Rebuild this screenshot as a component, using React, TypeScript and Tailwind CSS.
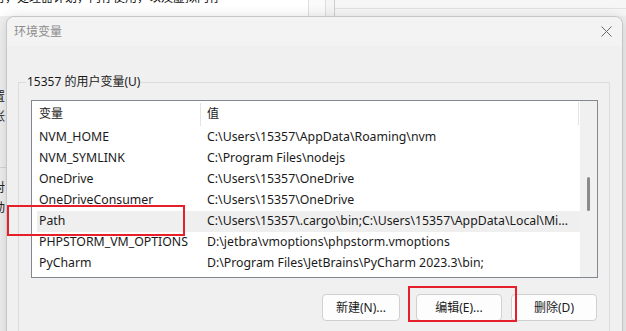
import React from "react";

const rows: [string, string][] = [
  ["NVM_HOME", "C:\\Users\\15357\\AppData\\Roaming\\nvm"],
  ["NVM_SYMLINK", "C:\\Program Files\\nodejs"],
  ["OneDrive", "C:\\Users\\15357\\OneDrive"],
  ["OneDriveConsumer", "C:\\Users\\15357\\OneDrive"],
  ["Path", "C:\\Users\\15357\\.cargo\\bin;C:\\Users\\15357\\AppData\\Local\\Mi..."],
  ["PHPSTORM_VM_OPTIONS", "D:\\jetbra\\vmoptions\\phpstorm.vmoptions"],
  ["PyCharm", "D:\\Program Files\\JetBrains\\PyCharm 2023.3\\bin;"],
];

function CloseIcon() {
  return (
    <svg width="11" height="11" viewBox="0 0 11 11" fill="none">
      <path d="M0.5 0.5L10.5 10.5M10.5 0.5L0.5 10.5" stroke="#6b6b6b" strokeWidth="1" />
    </svg>
  );
}

export default function App() {
  return (
    <div className="relative h-[331px] w-[626px] overflow-hidden bg-[#f0f0f0] font-['Noto_Sans','Noto_Sans_CJK_SC',sans-serif] text-[12px] text-black">
      {/* window behind, top strip */}
      <div className="flex h-[16px]">
        <div className="relative w-[308px] overflow-hidden bg-white">
          <span className="absolute left-[-7px] top-[-10px] whitespace-nowrap text-[12px] leading-[16px] text-[#111]">
            对，处理器计划，内存使用，以及虚拟内存
          </span>
        </div>
        <div className="w-[17px] border-l border-[#dedede] bg-[#fafafa]" />
        <div className="w-[9px] border-l border-[#dedede] bg-[#f5f5f5]" />
        <div className="flex-1 border-l border-[#cfcfcf] bg-[#f6f6f6]">
          <div className="mt-[8px] border-t border-[#e2e2e2]" />
        </div>
      </div>

      {/* window behind, left strip */}
      <div className="w-[6px] overflow-hidden">
        <div className="ml-[-7px] pt-[71px] leading-[20px] text-[#222]">
          <div>置</div>
          <div>张</div>
        </div>
        <div className="mt-[40px] border-t border-[#d6d6d6]" />
        <div className="ml-[-7px] pt-[10px] leading-[20px] text-[#222]">
          <div>对</div>
          <div>动</div>
        </div>
      </div>

      {/* dialog */}
      <div className="absolute left-[6px] top-[16px] flex h-[340px] w-[617px] flex-col rounded-t-[8px] border border-[#c6c6c6] bg-[#f0f0f0] shadow-[0_2px_14px_rgba(0,0,0,0.16)]">
        <div className="flex h-[29px] items-center justify-between rounded-t-[8px] bg-[#f3f3f3] pl-[7px] pr-[10px]">
          <span className="text-[12px] text-[#8c8c8c]">环境变量</span>
          <CloseIcon />
        </div>

        <div className="pl-[11px] pr-[12px]">
          <fieldset className="mt-[28px] h-[280px] border border-[#dcdcdc] pl-[7px] pr-[11px] pt-[10px]">
            <legend className="px-[1px] leading-[16px] text-[12px] text-[#1a1a1a]">15357 的用户变量(U)</legend>

            <div className="ml-[5px] flex h-[178px] border border-[#828790] bg-white">
              <div className="flex-1">
                <div className="relative flex h-[26px] items-center">
                  <div className="w-[168px] pl-[7px] text-[#1a1a1a]">变量</div>
                  <div className="h-[23px] w-px bg-[#e3e3e3]" />
                  <div className="flex-1 pl-[6px] text-[#1a1a1a]">值</div>
                  <div className="absolute right-[1px] top-[1px] h-[23px] w-px bg-[#e3e3e3]" />
                </div>
                {rows.map(([name, value]) => (
                  <div
                    key={name}
                    className={
                      name === "Path"
                        ? "ml-[5px] flex h-[21px] items-center bg-[#efefef] text-[12.3px] text-[#1a1a1a]"
                        : "ml-[5px] flex h-[21px] items-center text-[12.3px] text-[#1a1a1a]"
                    }
                  >
                    <div className="w-[170px] whitespace-nowrap pl-[2px]">{name}</div>
                    <div className="flex-1 whitespace-nowrap">{value}</div>
                  </div>
                ))}
              </div>
              <div className="w-[17px] bg-[#f0f0f0] pl-[7px] pt-[76px]">
                <div className="h-[34px] w-[3px] rounded-full bg-[#8a8a8a]" />
              </div>
            </div>

            <div className="mt-[16px] flex justify-end pr-px">
              <button className="h-[27px] w-[78px] rounded-[4px] border border-[#d0d0d0] bg-[#fdfdfd] text-[12px] text-[#1a1a1a]">
                新建(N)...
              </button>
              <button className="ml-[16px] h-[27px] w-[86px] rounded-[4px] border border-[#d0d0d0] bg-[#fdfdfd] text-[12px] text-[#1a1a1a]">
                编辑(E)...
              </button>
              <button className="ml-[9px] h-[27px] w-[86px] rounded-[4px] border border-[#d0d0d0] bg-[#fdfdfd] text-[12px] text-[#1a1a1a]">
                删除(D)
              </button>
            </div>
          </fieldset>
        </div>
      </div>

      {/* red annotation boxes */}
      <div className="absolute left-[7px] top-[205px] h-[31px] w-[178px] border-2 border-[#e5202b]" />
      <div className="absolute left-[408px] top-[286px] h-[36px] w-[109px] border-2 border-[#e5202b]" />
    </div>
  );
}
